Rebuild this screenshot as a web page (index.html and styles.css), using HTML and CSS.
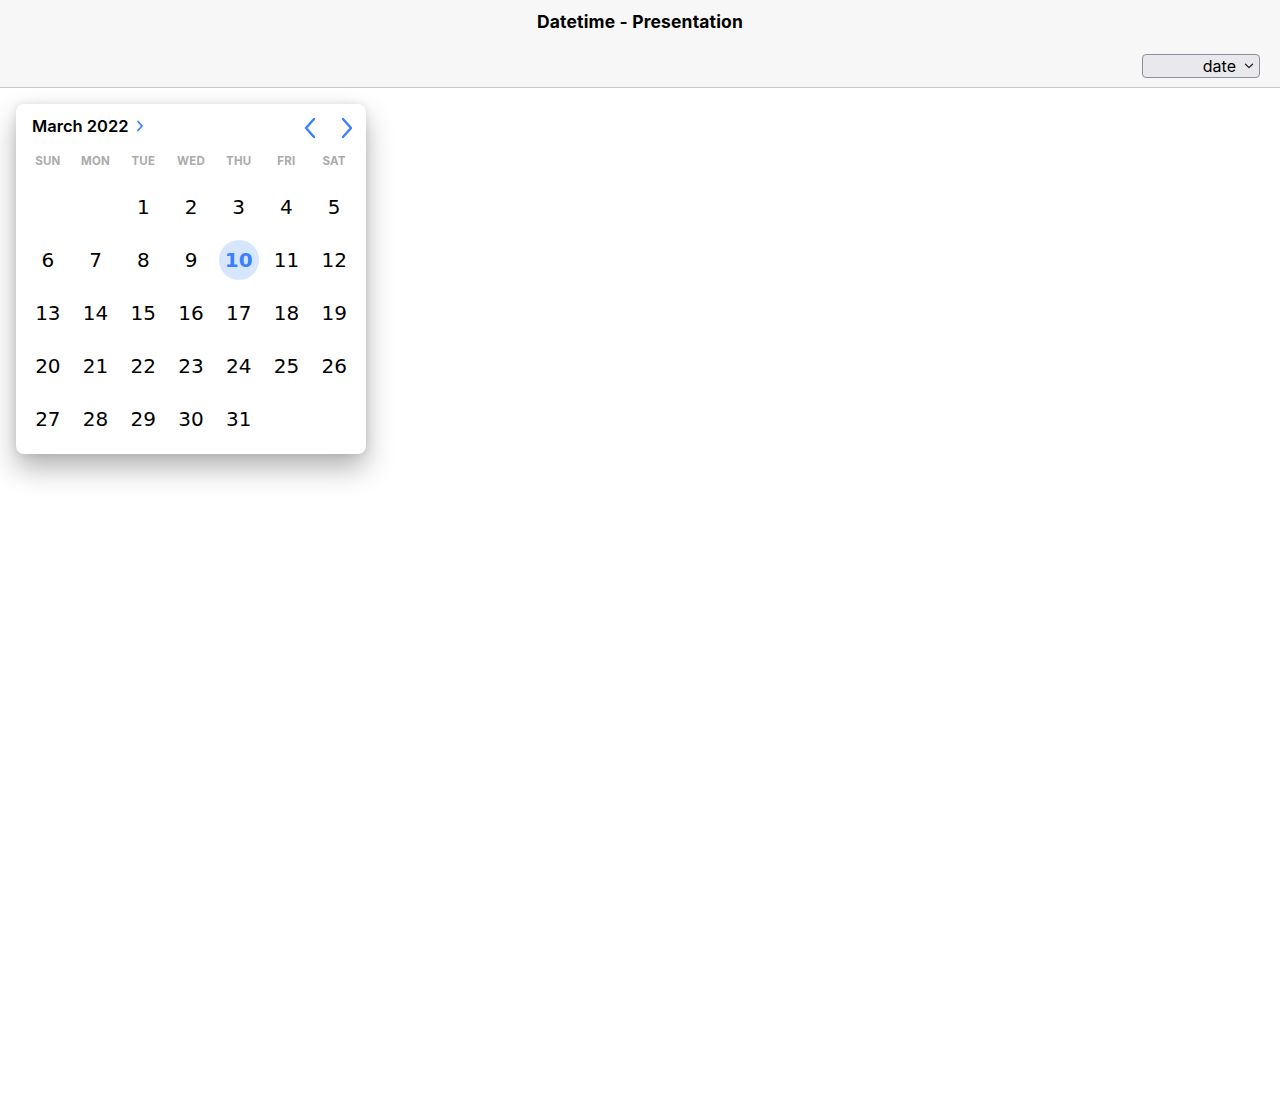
FILE: index.html
```html
<!DOCTYPE html>
<html>
<head>
<meta charset="utf-8">
<link rel="stylesheet" href="styles.css">
</head>
<body>
<header class="toolbar">
  <div class="title">Datetime - Presentation</div>
  <div class="toolbar-row">
    <div class="select"><span>date</span>
      <svg width="10" height="6" viewBox="0 0 10 6"><path d="M1.5 1.2 L5 4.6 L8.5 1.2" fill="none" stroke="#222" stroke-width="1.3" stroke-linecap="round" stroke-linejoin="round"/></svg>
    </div>
  </div>
</header>
<main class="content">
  <div class="calendar">
    <div class="cal-header">
      <div class="month">March 2022
        <svg class="month-chev" width="8" height="12" viewBox="0 0 8 12"><path d="M2 1.5 L6 6 L2 10.5" fill="none" stroke="#3880ff" stroke-width="1.8" stroke-linecap="round" stroke-linejoin="round"/></svg>
      </div>
      <div class="nav">
        <svg width="14" height="22" viewBox="0 0 14 22"><path d="M11 2 L3 11 L11 20" fill="none" stroke="#3880ff" stroke-width="2.4" stroke-linecap="round" stroke-linejoin="round"/></svg>
        <svg width="14" height="22" viewBox="0 0 14 22"><path d="M3 2 L11 11 L3 20" fill="none" stroke="#3880ff" stroke-width="2.4" stroke-linecap="round" stroke-linejoin="round"/></svg>
      </div>
    </div>
    <div class="weekdays">
      <div>SUN</div><div>MON</div><div>TUE</div><div>WED</div><div>THU</div><div>FRI</div><div>SAT</div>
    </div>
    <div class="days">
      <div></div><div></div><div class="day">1</div><div class="day">2</div><div class="day">3</div><div class="day">4</div><div class="day">5</div>
      <div class="day">6</div><div class="day">7</div><div class="day">8</div><div class="day">9</div><div class="day today"><span>10</span></div><div class="day">11</div><div class="day">12</div>
      <div class="day">13</div><div class="day">14</div><div class="day">15</div><div class="day">16</div><div class="day">17</div><div class="day">18</div><div class="day">19</div>
      <div class="day">20</div><div class="day">21</div><div class="day">22</div><div class="day">23</div><div class="day">24</div><div class="day">25</div><div class="day">26</div>
      <div class="day">27</div><div class="day">28</div><div class="day">29</div><div class="day">30</div><div class="day">31</div><div></div><div></div>
    </div>
  </div>
</main>
</body>
</html>
```
FILE: styles.css
```css
html, body {
  margin: 0;
  padding: 0;
  background: #fff;
  min-height: 100%;
  height: 100%;
}
body {
  font-family: Inter, "Liberation Sans", sans-serif;
  color: #000;
}
.toolbar {
  background: #f7f7f7;
  border-bottom: 1px solid #c8c8c8;
  height: 88px;
  box-sizing: border-box;
  display: flex;
  flex-direction: column;
}
.title {
  text-align: center;
  font-weight: 700;
  font-size: 17.5px;
  letter-spacing: 0.15px;
  line-height: 22px;
  padding-top: 11px;
}
.toolbar-row {
  display: flex;
  justify-content: flex-end;
  padding: 21px 20px 0 0;
}
.select {
  width: 118px;
  height: 24px;
  box-sizing: border-box;
  background: #e9e9ed;
  border: 1px solid #8f8f9d;
  border-radius: 4px;
  display: flex;
  align-items: center;
  justify-content: flex-end;
  gap: 8px;
  padding-right: 5px;
  font-size: 16px;
  color: #000;
}
.select span { line-height: 20px; }
.content {
  padding: 16px;
}
.calendar {
  width: 350px;
  height: 350px;
  box-sizing: border-box;
  background: #fff;
  border-radius: 8px;
  box-shadow: 0 14px 28px rgba(0,0,0,0.3), 0 0 8px rgba(0,0,0,0.1);
  padding: 0 8px;
}
.cal-header {
  display: flex;
  justify-content: space-between;
  align-items: center;
  height: 44px;
  padding: 0 4px 0 8px;
}
.month {
  font-weight: 600;
  font-size: 16.5px;
  display: flex;
  align-items: center;
  gap: 8px;
}
.nav {
  display: flex;
  gap: 23px;
  align-items: center;
  padding-top: 3px;
}
.weekdays {
  display: grid;
  grid-template-columns: repeat(7, 1fr);
  text-align: center;
  font-size: 11.5px;
  font-weight: 700;
  color: #ababab;
  height: 26px;
  line-height: 26px;
  letter-spacing: 0.2px;
}
.days {
  display: grid;
  grid-template-columns: repeat(7, 1fr);
  grid-auto-rows: 53px;
  padding-top: 6px;
  font-family: "DejaVu Sans", sans-serif;
  font-size: 20px;
}
.day {
  display: flex;
  align-items: center;
  justify-content: center;
}
.today span {
  width: 40px;
  height: 40px;
  border-radius: 50%;
  background: #d7e6ff;
  color: #3880ff;
  font-weight: bold;
  display: flex;
  align-items: center;
  justify-content: center;
}
```
